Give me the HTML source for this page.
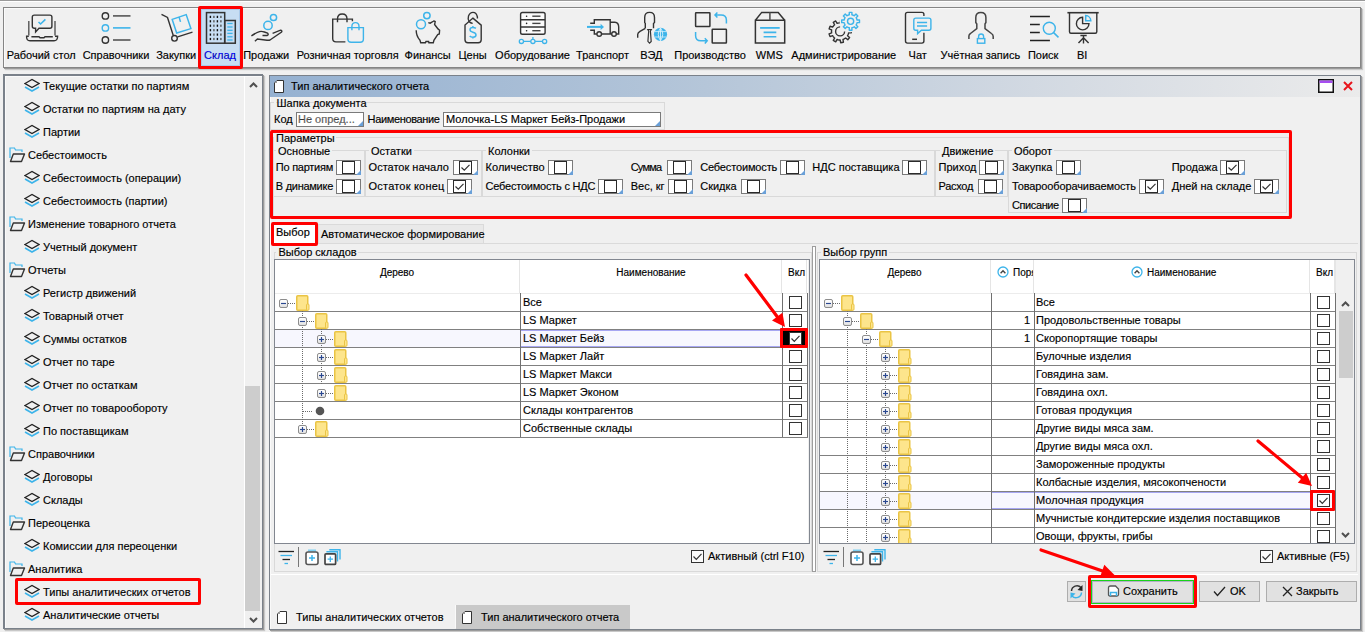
<!DOCTYPE html>
<html><head><meta charset="utf-8">
<style>
*{box-sizing:border-box;margin:0;padding:0}
html,body{width:1365px;height:632px;overflow:hidden;background:#f0f0f0;font-family:"Liberation Sans",sans-serif;font-size:11px;color:#000}
body{position:relative}
.a{position:absolute}
.t{position:absolute;white-space:nowrap;line-height:13px;-webkit-text-stroke:0.15px #000}
.frame{position:absolute;border:1px solid #858585;box-shadow:1px 1px 0 #9a9a9a,2px 2px 1px #c8c8c8, inset 1px 1px 0 #fafafa}
</style></head><body>

<div class="a" style="left:0px;top:0px;width:1365px;height:1px;background:#9a9a9a"></div>
<div class="a" style="left:0px;top:1px;width:1365px;height:1px;background:#fff"></div>
<div class="frame" style="left:3px;top:7px;width:1358px;height:61px"></div>
<div class="a" style="left:201px;top:9px;width:39px;height:57px;background:#c7ddf3;border:1px solid #a9c9ea"></div>
<div class="t" style="left:-58.75px;top:49px;width:200px;text-align:center">Рабочий стол</div>
<div class="t" style="left:16.0px;top:49px;width:200px;text-align:center">Справочники</div>
<div class="t" style="left:76.19999999999999px;top:49px;width:200px;text-align:center">Закупки</div>
<div class="t" style="left:120.0px;top:49px;width:200px;text-align:center;color:#0000ff">Склад</div>
<div class="t" style="left:166.2px;top:49px;width:200px;text-align:center">Продажи</div>
<div class="t" style="left:247.7px;top:49px;width:200px;text-align:center">Розничная торговля</div>
<div class="t" style="left:327.7px;top:49px;width:200px;text-align:center">Финансы</div>
<div class="t" style="left:372.5px;top:49px;width:200px;text-align:center">Цены</div>
<div class="t" style="left:432.5px;top:49px;width:200px;text-align:center">Оборудование</div>
<div class="t" style="left:502.5px;top:49px;width:200px;text-align:center">Транспорт</div>
<div class="t" style="left:551.3px;top:49px;width:200px;text-align:center">ВЭД</div>
<div class="t" style="left:610.1px;top:49px;width:200px;text-align:center">Производство</div>
<div class="t" style="left:669.3px;top:49px;width:200px;text-align:center">WMS</div>
<div class="t" style="left:743.8px;top:49px;width:200px;text-align:center">Администрирование</div>
<div class="t" style="left:817.7px;top:49px;width:200px;text-align:center">Чат</div>
<div class="t" style="left:880.4px;top:49px;width:200px;text-align:center">Учётная запись</div>
<div class="t" style="left:943.2px;top:49px;width:200px;text-align:center">Поиск</div>
<div class="t" style="left:982.0999999999999px;top:49px;width:200px;text-align:center">BI</div>
<svg class="a" style="left:0;top:0" width="1365" height="70" viewBox="0 0 1365 70"><g transform="translate(22,10)"><path d="M6.8 11 V25.6 M33 11 V25.6" fill="none" stroke="#555" stroke-width="1.4" /><path d="M6.8 26.3 H4.6 Q4.3 30.8 8 30.8 H32 Q35.7 30.8 35.6 26.3 H33" fill="none" stroke="#333" stroke-width="1.4" /><path d="M9.4 26.7 H17 L18 27.7 H22 L23 26.7 H30.8" fill="none" stroke="#333" stroke-width="1.4" /><path d="M12.3 5.1 H27.9 Q29.9 5.1 29.9 7.1 V16.2 Q29.9 18.2 27.9 18.2 H17 L13.6 22 V18.2 H12.3 Q10.3 18.2 10.3 16.2 V7.1 Q10.3 5.1 12.3 5.1 Z" fill="none" stroke="#333" stroke-width="1.4" /><path d="M16.5 12 L18.6 14 L23.4 9.4" fill="none" stroke="#3db4ea" stroke-width="1.6" /></g><circle cx="105.4" cy="15.9" r="3.2" fill="none" stroke="#333" stroke-width="1.4"/><path d="M113 15.9 H130.5" fill="none" stroke="#555" stroke-width="1.6" /><circle cx="105.4" cy="27.9" r="3.2" fill="none" stroke="#3db4ea" stroke-width="1.4"/><path d="M113 27.9 H130.5" fill="none" stroke="#3db4ea" stroke-width="1.6" /><circle cx="105.4" cy="40" r="3.2" fill="none" stroke="#333" stroke-width="1.4"/><path d="M113 40 H130.5" fill="none" stroke="#555" stroke-width="1.6" /><g transform="translate(158,8)"><path d="M3.5 6.3 L9.5 9.5 L15.2 27.2" fill="none" stroke="#333" stroke-width="1.4" /><circle cx="16.5" cy="30.3" r="2.8" fill="none" stroke="#333" stroke-width="1.4"/><path d="M19.6 28.8 L34.5 24.2" fill="none" stroke="#333" stroke-width="1.4" /><path d="M14.2 11.4 L28.2 6.6 L32.9 20.6 L18.7 25 Z M21.2 9.5 L22.5 13.9" fill="none" stroke="#3db4ea" stroke-width="1.5" /></g><g transform="translate(200,8)"><rect x="6.5" y="4.6" width="18.2" height="30.6" fill="none" stroke="#333" stroke-width="1.5"/><rect x="24.7" y="12.5" width="10.6" height="22.7" fill="none" stroke="#333" stroke-width="1.5"/><rect x="9.700000000000001" y="7.800000000000001" width="1.4" height="2.2" fill="#111"/><rect x="13.200000000000001" y="7.800000000000001" width="1.4" height="2.2" fill="#555"/><rect x="16.7" y="7.800000000000001" width="1.4" height="2.2" fill="#111"/><rect x="20.2" y="7.800000000000001" width="1.4" height="2.2" fill="#555"/><rect x="9.700000000000001" y="12.200000000000001" width="1.4" height="2.2" fill="#111"/><rect x="13.200000000000001" y="12.200000000000001" width="1.4" height="2.2" fill="#555"/><rect x="16.7" y="12.200000000000001" width="1.4" height="2.2" fill="#111"/><rect x="20.2" y="12.200000000000001" width="1.4" height="2.2" fill="#555"/><rect x="9.700000000000001" y="16.599999999999998" width="1.4" height="2.2" fill="#111"/><rect x="13.200000000000001" y="16.599999999999998" width="1.4" height="2.2" fill="#555"/><rect x="16.7" y="16.599999999999998" width="1.4" height="2.2" fill="#111"/><rect x="20.2" y="16.599999999999998" width="1.4" height="2.2" fill="#555"/><rect x="9.700000000000001" y="21.099999999999998" width="1.4" height="2.2" fill="#111"/><rect x="13.200000000000001" y="21.099999999999998" width="1.4" height="2.2" fill="#555"/><rect x="16.7" y="21.099999999999998" width="1.4" height="2.2" fill="#111"/><rect x="20.2" y="21.099999999999998" width="1.4" height="2.2" fill="#555"/><rect x="9.700000000000001" y="25.5" width="1.4" height="2.2" fill="#111"/><rect x="13.200000000000001" y="25.5" width="1.4" height="2.2" fill="#555"/><rect x="16.7" y="25.5" width="1.4" height="2.2" fill="#111"/><rect x="20.2" y="25.5" width="1.4" height="2.2" fill="#555"/><rect x="9.700000000000001" y="29.9" width="1.4" height="2.2" fill="#111"/><rect x="13.200000000000001" y="29.9" width="1.4" height="2.2" fill="#555"/><rect x="16.7" y="29.9" width="1.4" height="2.2" fill="#111"/><rect x="20.2" y="29.9" width="1.4" height="2.2" fill="#555"/><path d="M27.3 15.5 H32.6" fill="none" stroke="#3db4ea" stroke-width="1.3" /><path d="M27.3 19 H32.6" fill="none" stroke="#3db4ea" stroke-width="1.3" /><path d="M27.3 22.3 H32.6" fill="none" stroke="#3db4ea" stroke-width="1.3" /><path d="M27.3 25.4 H32.6" fill="none" stroke="#3db4ea" stroke-width="1.3" /><path d="M27.3 28.8 H32.6" fill="none" stroke="#3db4ea" stroke-width="1.3" /><path d="M27.3 32 H32.6" fill="none" stroke="#3db4ea" stroke-width="1.3" /></g><g transform="translate(246,8)"><circle cx="27.5" cy="9.5" r="3.1" fill="none" stroke="#3db4ea" stroke-width="1.5"/><circle cx="22" cy="17.4" r="4.2" fill="none" stroke="#3db4ea" stroke-width="1.5"/><path d="M5.4 27.8 Q10 24.8 13.5 23.6 Q15.5 23 18.4 24 L21.5 25 Q23 26.5 21.2 27.5 H16.5" fill="none" stroke="#333" stroke-width="1.4" /><path d="M26.6 25.3 L34.5 22.2 Q36.5 22.5 35.6 24 L24 32 Q23 32.5 21 32.2 L11.4 31 L8.9 33.2" fill="none" stroke="#333" stroke-width="1.4" /></g><g transform="translate(328,8)"><path d="M17.4 33.9 H8 Q4.7 33.9 4.7 30.6 V11.1 H24.4 V13.3" fill="none" stroke="#333" stroke-width="1.4" /><path d="M9.5 14.2 V11 Q9.5 6 14.25 6 Q19 6 19 11 V14.2" fill="none" stroke="#333" stroke-width="1.4" /><path d="M19.9 19.6 H35.4 V31 Q35.4 34.2 32.2 34.2 H23.1 Q19.9 34.2 19.9 31 Z" fill="none" stroke="#3db4ea" stroke-width="1.4" /><path d="M23.9 22.2 V18.5 Q23.9 14.6 27.45 14.6 Q31 14.6 31 18.5 V22.2" fill="none" stroke="#3db4ea" stroke-width="1.4" /></g><g transform="translate(408,8)"><circle cx="18.9" cy="7.6" r="3.2" fill="none" stroke="#3db4ea" stroke-width="1.5"/><circle cx="13" cy="16.3" r="4.5" fill="none" stroke="#3db4ea" stroke-width="1.5"/><path d="M8.2 22.2 Q8.2 28 12 32.3 L12.7 34.8 H17.4 L18 33.5 H20.6 L20.9 34.8 H25.3 L25.9 32.3 L29.7 26.6 L31.3 26 L31.6 22.2 L30 20.9 L26.6 16.5 L27.2 13.6 Q26 12.6 25.3 13.3 L22.2 15.2 L20.3 14.6" fill="none" stroke="#333" stroke-width="1.4" /></g><g transform="translate(453,8)"><path d="M19.9 10.1 L28.2 17.1 V31.8 Q28.2 34.8 25.2 34.8 H15 Q12 34.8 12 31.8 V17.1 Z" fill="none" stroke="#333" stroke-width="1.4" /><path d="M16.3 13.8 Q14.5 10.8 15.5 8 Q17 4.4 20 4.4 Q23.5 4.4 24.4 9 L24.4 10.4" fill="none" stroke="#333" stroke-width="1.4" /><path d="M16.3 13.8 Q17.6 15.4 19.6 15.2" fill="none" stroke="#333" stroke-width="1.4" /><path d="M22.9 20.4 Q21.8 19.4 19.9 19.4 Q17 19.4 17 21.6 Q17 23.6 19.9 24.2 Q23 24.8 23 27 Q23 29.2 19.9 29.2 Q17.8 29.2 16.7 28 M19.9 18 V19.4 M19.9 29.2 V30.6" fill="none" stroke="#3db4ea" stroke-width="1.5" /></g><g transform="translate(512,8)"><rect x="8.6" y="4.5" width="24.5" height="21.8" rx="1.8" fill="#fbfbfb" stroke="#333" stroke-width="1.4"/><path d="M8.6 11.7 H33.1 M8.6 19 H33.1" fill="none" stroke="#333" stroke-width="1.5" /><circle cx="14.6" cy="8.2" r="0.8" fill="#222"/><path d="M20.3 8.2 H28.5" fill="none" stroke="#444" stroke-width="1.4" /><circle cx="14.6" cy="15.4" r="0.8" fill="#222"/><path d="M20.3 15.4 H28.5" fill="none" stroke="#444" stroke-width="1.4" /><circle cx="14.6" cy="22.7" r="0.8" fill="#222"/><path d="M20.3 22.7 H28.5" fill="none" stroke="#444" stroke-width="1.4" /><path d="M20.9 29.1 V31.2 M11.6 33.4 H18.7 M23.1 33.4 H30.4" fill="none" stroke="#3db4ea" stroke-width="1.3" /><circle cx="9.4" cy="33.4" r="2.1" fill="none" stroke="#3db4ea" stroke-width="1.3"/><circle cx="20.9" cy="33.4" r="2.1" fill="none" stroke="#3db4ea" stroke-width="1.3"/><circle cx="32.6" cy="33.4" r="2.1" fill="none" stroke="#3db4ea" stroke-width="1.3"/></g><g transform="translate(582,8)"><path d="M8.2 15.2 H12.3 V11.7 H28.2 V26 M28.2 14.2 H32.9 Q36.7 14.5 36.7 19 V26 H34.3 M29.7 26 H19.5 M14.9 26 H12.3 V22.2 H8.2" fill="none" stroke="#333" stroke-width="1.4" /><circle cx="17.2" cy="26" r="2.3" fill="none" stroke="#333" stroke-width="1.4"/><circle cx="32" cy="26" r="2.3" fill="none" stroke="#333" stroke-width="1.4"/><path d="M5 18.9 H20" fill="none" stroke="#3db4ea" stroke-width="2" /><polygon points="22,18.9 18.6,15.8 18.6,22" fill="#3db4ea"/></g><g transform="translate(632,8)"><path d="M13.3 20.3 V15.5 L12.7 14.5 V9.5 Q12.7 4.4 17.6 4.4 Q22.5 4.4 22.5 9.5 V14.5 L21.5 15.5 V20.3" fill="none" stroke="#333" stroke-width="1.4" /><path d="M13.3 20.3 L8 23.3 Q5.7 24.8 5.7 26.5 V29.7" fill="none" stroke="#333" stroke-width="1.4" /><path d="M15.8 21.5 H19.3 L18.4 23 L19.2 33.4 L17.5 35.1 L15.9 33.4 L16.7 23 Z" fill="none" stroke="#333" stroke-width="1.2" /><circle cx="28.5" cy="26.3" r="6.6" fill="#3db4ea"/><path d="M22.5 23.6 H34.5 M22.5 29 H34.5" fill="none" stroke="#d8f0fb" stroke-width="0.8" /><path d="M28.5 19.9 V32.7 M28.5 19.9 Q24 26.3 28.5 32.7 M28.5 19.9 Q33 26.3 28.5 32.7" fill="none" stroke="#d8f0fb" stroke-width="0.9" /></g><g transform="translate(690,8)"><rect x="5.6" y="4.7" width="14.3" height="13.8" rx="0.5" fill="none" stroke="#333" stroke-width="1.5"/><rect x="22.2" y="21.2" width="14.2" height="13.9" rx="0.5" fill="none" stroke="#333" stroke-width="1.5"/><path d="M36.4 15.5 V12 Q36.4 7 31 7 H25.2 M27.4 4.4 L25 7 L27.4 9.6" fill="none" stroke="#3db4ea" stroke-width="1.5" /><path d="M5.6 24 V27.8 Q5.6 32.8 10.8 32.8 H16.8 M14.8 30.2 L17.2 32.8 L14.8 35.4" fill="none" stroke="#3db4ea" stroke-width="1.5" /></g><g transform="translate(750,8)"><path d="M5.4 12.3 H34.7 V35.1 H5.4 Z M5.4 12.3 L11.7 4.4 H28.2 L34.7 12.3" fill="none" stroke="#333" stroke-width="1.5" /><path d="M19.9 4.4 V12.3" fill="none" stroke="#555" stroke-width="1.6" /><path d="M10.1 19.9 H29.7" fill="none" stroke="#3db4ea" stroke-width="1.8" /><path d="M13.6 24.4 H26.3 M13.6 28.8 H26.3" fill="none" stroke="#3db4ea" stroke-width="1.6" /></g><g transform="translate(824,8)"><path d="M32.91 11.36 L33.07 12.01 L35.50 11.96 L35.50 14.64 L33.07 14.59 L32.91 15.24 L32.43 16.39 L32.09 16.97 L33.84 18.65 L31.95 20.54 L30.27 18.79 L29.69 19.13 L28.54 19.61 L27.89 19.77 L27.94 22.20 L25.26 22.20 L25.31 19.77 L24.66 19.61 L23.51 19.13 L22.93 18.79 L21.25 20.54 L19.36 18.65 L21.11 16.97 L20.77 16.39 L20.29 15.24 L20.13 14.59 L17.70 14.64 L17.70 11.96 L20.13 12.01 L20.29 11.36 L20.77 10.21 L21.11 9.63 L19.36 7.95 L21.25 6.06 L22.93 7.81 L23.51 7.47 L24.66 6.99 L25.31 6.83 L25.26 4.40 L27.94 4.40 L27.89 6.83 L28.54 6.99 L29.69 7.47 L30.27 7.81 L31.95 6.06 L33.84 7.95 L32.09 9.63 L32.43 10.21 Z" fill="none" stroke="#3db4ea" stroke-width="1.4" stroke-linejoin="round"/><circle cx="26.6" cy="13.3" r="3.1" fill="none" stroke="#3db4ea" stroke-width="1.4"/><clipPath id="gc"><path d="M0 0 H40 V40 H0 Z M26.6 13.3 m-11 0 a11 11 0 1 0 22 0 a11 11 0 1 0 -22 0 Z" clip-rule="evenodd"/></clipPath><g clip-path="url(#gc)"><path d="M24.40 21.15 L24.58 21.97 L27.31 21.98 L27.31 24.82 L24.58 24.83 L24.40 25.65 L23.91 27.01 L23.52 27.75 L25.60 29.52 L23.78 31.69 L21.67 29.95 L21.01 30.46 L19.76 31.18 L18.98 31.50 L19.44 34.19 L16.65 34.69 L16.16 32.00 L15.32 31.96 L13.90 31.71 L13.10 31.46 L11.72 33.82 L9.27 32.40 L10.62 30.03 L10.00 29.46 L9.07 28.36 L8.62 27.65 L6.05 28.57 L5.08 25.90 L7.64 24.95 L7.53 24.12 L7.53 22.68 L7.64 21.85 L5.08 20.90 L6.05 18.23 L8.62 19.15 L9.07 18.44 L10.00 17.34 L10.62 16.77 L9.27 14.40 L11.72 12.98 L13.10 15.34 L13.90 15.09 L15.32 14.84 L16.16 14.80 L16.65 12.11 L19.44 12.61 L18.98 15.30 L19.76 15.62 L21.01 16.34 L21.67 16.85 L23.78 15.11 L25.60 17.28 L23.52 19.05 L23.91 19.79 Z" fill="none" stroke="#333" stroke-width="1.4" stroke-linejoin="round"/></g><path d="M16.1 18.9 A4.5 4.5 0 1 0 20.6 23.4" fill="none" stroke="#333" stroke-width="1.4" /></g><g transform="translate(898,8)"><path d="M25.9 7.9 V6.4 Q25.9 4.4 23.9 4.4 H9.5 Q7.5 4.4 7.5 6.4 V33.1 Q7.5 35.1 9.5 35.1 H23.9 Q25.9 35.1 25.9 33.1 V24.7" fill="none" stroke="#333" stroke-width="1.4" /><path d="M14.2 31.3 H19" fill="none" stroke="#333" stroke-width="1.5" /><path d="M17.8 10.1 H30.9 Q32.9 10.1 32.9 12.1 V20.2 Q32.9 22.2 30.9 22.2 H23.4 L19.6 25.6 V22.2 H17.8 Q15.8 22.2 15.8 20.2 V12.1 Q15.8 10.1 17.8 10.1 Z" fill="none" stroke="#3db4ea" stroke-width="1.4" /><path d="M19 14.6 H29.1 M19 18 H29.1" fill="none" stroke="#3db4ea" stroke-width="1.5" /></g><g transform="translate(960,8)"><path d="M8.9 31 V28 Q8.9 26.5 10.5 25.5 L16.8 20.6 V16 L15.8 14.5 V9.5 Q15.8 4.4 20.85 4.4 Q25.9 4.4 25.9 9.5 V14.5 L25 16 V20.6 L31.4 25.5 Q33.2 26.7 33.2 28.4 V31" fill="none" stroke="#444" stroke-width="1.5" /><rect x="17.4" y="30.6" width="7.4" height="4.6" fill="none" stroke="#3db4ea" stroke-width="1.4"/><path d="M18.6 30.6 V28.5 Q18.6 26 21.1 26 Q23.6 26 23.6 28.5 V30.6" fill="none" stroke="#3db4ea" stroke-width="1.4" /></g><g transform="translate(1024,8)"><path d="M6 8.4 H25.9 M6 16.5 H15.8 M6 24.4 H15.8 M6 32.5 H25.9" fill="none" stroke="#222" stroke-width="1.5" /><circle cx="25.3" cy="20.3" r="6" fill="none" stroke="#3db4ea" stroke-width="1.4"/><path d="M29.6 24.6 L34.5 29.4" fill="none" stroke="#3db4ea" stroke-width="1.5" /></g><g transform="translate(1062,8)"><path d="M5.4 4.7 H36.7" fill="none" stroke="#333" stroke-width="1.6" /><path d="M7.5 4.7 V23.8 Q7.5 25.3 9 25.3 H33.3 Q34.8 25.3 34.8 23.8 V4.7" fill="none" stroke="#333" stroke-width="1.4" /><path d="M18.4 27.5 H24.7 M21.5 27.5 V35.4 M21.5 29.7 L16.5 35.1 M21.5 29.7 L26.6 35.1" fill="none" stroke="#333" stroke-width="1.4" /><path d="M20.6 9.3 A6.3 6.3 0 1 0 27 15.6 H20.6 Z" fill="none" stroke="#333" stroke-width="1.4" /><path d="M23.7 7.6 A5.4 5.4 0 0 1 28.8 12.8 H23.7 Z" fill="none" stroke="#3db4ea" stroke-width="1.5" /></g></svg>
<div class="a" style="left:198px;top:6px;width:45px;height:63px;border:3px solid #ff0000;border-radius:2px"></div>
<div class="frame" style="left:3px;top:74px;width:260px;height:555px;border-width:2px 1px 1px 2px;border-color:#7a818a"></div>
<div class="a" style="left:244px;top:76px;width:1px;height:552px;background:#fff"></div>
<div class="a" style="left:245px;top:386px;width:15px;height:225px;background:#cdcdcd"></div>
<svg class="a" style="left:248.5px;top:81px;" width="9" height="7" viewBox="0 0 9 7"><path d="M1 6 L4.5 2.5 L8 6" fill="none" stroke="#505050" stroke-width="2"/></svg>
<svg class="a" style="left:248.5px;top:617px;" width="9" height="7" viewBox="0 0 9 7"><path d="M1 1 L4.5 4.5 L8 1" fill="none" stroke="#505050" stroke-width="2"/></svg>
<svg class="a" style="left:24px;top:78px;" width="16" height="15" viewBox="0 0 16 15"><path d="M1 5.5 L8 1.5 L15 5.5 L8 9.5 Z" fill="none" stroke="#222" stroke-width="1.3" stroke-linejoin="miter"/><path d="M1 9 L8 13 L15 9" fill="none" stroke="#3db4ea" stroke-width="1.6"/></svg>
<div class="t" style="left:43px;top:80px">Текущие остатки по партиям</div>
<svg class="a" style="left:24px;top:101px;" width="16" height="15" viewBox="0 0 16 15"><path d="M1 5.5 L8 1.5 L15 5.5 L8 9.5 Z" fill="none" stroke="#222" stroke-width="1.3" stroke-linejoin="miter"/><path d="M1 9 L8 13 L15 9" fill="none" stroke="#3db4ea" stroke-width="1.6"/></svg>
<div class="t" style="left:43px;top:103px">Остатки по партиям на дату</div>
<svg class="a" style="left:24px;top:124px;" width="16" height="15" viewBox="0 0 16 15"><path d="M1 5.5 L8 1.5 L15 5.5 L8 9.5 Z" fill="none" stroke="#222" stroke-width="1.3" stroke-linejoin="miter"/><path d="M1 9 L8 13 L15 9" fill="none" stroke="#3db4ea" stroke-width="1.6"/></svg>
<div class="t" style="left:43px;top:126px">Партии</div>
<svg class="a" style="left:9px;top:147px;" width="17" height="16" viewBox="0 0 17 16"><path d="M1 11 V1 H5.5 L6.5 3 H13 V5" fill="none" stroke="#3db4ea" stroke-width="1.2"/><path d="M4.3 7 H15.5 L12.5 14.5 H1.5 Z" fill="none" stroke="#333" stroke-width="1.4" stroke-linejoin="round"/></svg>
<div class="t" style="left:28px;top:149px">Себестоимость</div>
<svg class="a" style="left:24px;top:170px;" width="16" height="15" viewBox="0 0 16 15"><path d="M1 5.5 L8 1.5 L15 5.5 L8 9.5 Z" fill="none" stroke="#222" stroke-width="1.3" stroke-linejoin="miter"/><path d="M1 9 L8 13 L15 9" fill="none" stroke="#3db4ea" stroke-width="1.6"/></svg>
<div class="t" style="left:43px;top:172px">Себестоимость (операции)</div>
<svg class="a" style="left:24px;top:193px;" width="16" height="15" viewBox="0 0 16 15"><path d="M1 5.5 L8 1.5 L15 5.5 L8 9.5 Z" fill="none" stroke="#222" stroke-width="1.3" stroke-linejoin="miter"/><path d="M1 9 L8 13 L15 9" fill="none" stroke="#3db4ea" stroke-width="1.6"/></svg>
<div class="t" style="left:43px;top:195px">Себестоимость (партии)</div>
<svg class="a" style="left:9px;top:216px;" width="17" height="16" viewBox="0 0 17 16"><path d="M1 11 V1 H5.5 L6.5 3 H13 V5" fill="none" stroke="#3db4ea" stroke-width="1.2"/><path d="M4.3 7 H15.5 L12.5 14.5 H1.5 Z" fill="none" stroke="#333" stroke-width="1.4" stroke-linejoin="round"/></svg>
<div class="t" style="left:28px;top:218px">Изменение товарного отчета</div>
<svg class="a" style="left:24px;top:239px;" width="16" height="15" viewBox="0 0 16 15"><path d="M1 5.5 L8 1.5 L15 5.5 L8 9.5 Z" fill="none" stroke="#222" stroke-width="1.3" stroke-linejoin="miter"/><path d="M1 9 L8 13 L15 9" fill="none" stroke="#3db4ea" stroke-width="1.6"/></svg>
<div class="t" style="left:43px;top:241px">Учетный документ</div>
<svg class="a" style="left:9px;top:262px;" width="17" height="16" viewBox="0 0 17 16"><path d="M1 11 V1 H5.5 L6.5 3 H13 V5" fill="none" stroke="#3db4ea" stroke-width="1.2"/><path d="M4.3 7 H15.5 L12.5 14.5 H1.5 Z" fill="none" stroke="#333" stroke-width="1.4" stroke-linejoin="round"/></svg>
<div class="t" style="left:28px;top:264px">Отчеты</div>
<svg class="a" style="left:24px;top:285px;" width="16" height="15" viewBox="0 0 16 15"><path d="M1 5.5 L8 1.5 L15 5.5 L8 9.5 Z" fill="none" stroke="#222" stroke-width="1.3" stroke-linejoin="miter"/><path d="M1 9 L8 13 L15 9" fill="none" stroke="#3db4ea" stroke-width="1.6"/></svg>
<div class="t" style="left:43px;top:287px">Регистр движений</div>
<svg class="a" style="left:24px;top:308px;" width="16" height="15" viewBox="0 0 16 15"><path d="M1 5.5 L8 1.5 L15 5.5 L8 9.5 Z" fill="none" stroke="#222" stroke-width="1.3" stroke-linejoin="miter"/><path d="M1 9 L8 13 L15 9" fill="none" stroke="#3db4ea" stroke-width="1.6"/></svg>
<div class="t" style="left:43px;top:310px">Товарный отчет</div>
<svg class="a" style="left:24px;top:331px;" width="16" height="15" viewBox="0 0 16 15"><path d="M1 5.5 L8 1.5 L15 5.5 L8 9.5 Z" fill="none" stroke="#222" stroke-width="1.3" stroke-linejoin="miter"/><path d="M1 9 L8 13 L15 9" fill="none" stroke="#3db4ea" stroke-width="1.6"/></svg>
<div class="t" style="left:43px;top:333px">Суммы остатков</div>
<svg class="a" style="left:24px;top:354px;" width="16" height="15" viewBox="0 0 16 15"><path d="M1 5.5 L8 1.5 L15 5.5 L8 9.5 Z" fill="none" stroke="#222" stroke-width="1.3" stroke-linejoin="miter"/><path d="M1 9 L8 13 L15 9" fill="none" stroke="#3db4ea" stroke-width="1.6"/></svg>
<div class="t" style="left:43px;top:356px">Отчет по таре</div>
<svg class="a" style="left:24px;top:377px;" width="16" height="15" viewBox="0 0 16 15"><path d="M1 5.5 L8 1.5 L15 5.5 L8 9.5 Z" fill="none" stroke="#222" stroke-width="1.3" stroke-linejoin="miter"/><path d="M1 9 L8 13 L15 9" fill="none" stroke="#3db4ea" stroke-width="1.6"/></svg>
<div class="t" style="left:43px;top:379px">Отчет по остаткам</div>
<svg class="a" style="left:24px;top:400px;" width="16" height="15" viewBox="0 0 16 15"><path d="M1 5.5 L8 1.5 L15 5.5 L8 9.5 Z" fill="none" stroke="#222" stroke-width="1.3" stroke-linejoin="miter"/><path d="M1 9 L8 13 L15 9" fill="none" stroke="#3db4ea" stroke-width="1.6"/></svg>
<div class="t" style="left:43px;top:402px">Отчет по товарообороту</div>
<svg class="a" style="left:24px;top:423px;" width="16" height="15" viewBox="0 0 16 15"><path d="M1 5.5 L8 1.5 L15 5.5 L8 9.5 Z" fill="none" stroke="#222" stroke-width="1.3" stroke-linejoin="miter"/><path d="M1 9 L8 13 L15 9" fill="none" stroke="#3db4ea" stroke-width="1.6"/></svg>
<div class="t" style="left:43px;top:425px">По поставщикам</div>
<svg class="a" style="left:9px;top:446px;" width="17" height="16" viewBox="0 0 17 16"><path d="M1 11 V1 H5.5 L6.5 3 H13 V5" fill="none" stroke="#3db4ea" stroke-width="1.2"/><path d="M4.3 7 H15.5 L12.5 14.5 H1.5 Z" fill="none" stroke="#333" stroke-width="1.4" stroke-linejoin="round"/></svg>
<div class="t" style="left:28px;top:448px">Справочники</div>
<svg class="a" style="left:24px;top:469px;" width="16" height="15" viewBox="0 0 16 15"><path d="M1 5.5 L8 1.5 L15 5.5 L8 9.5 Z" fill="none" stroke="#222" stroke-width="1.3" stroke-linejoin="miter"/><path d="M1 9 L8 13 L15 9" fill="none" stroke="#3db4ea" stroke-width="1.6"/></svg>
<div class="t" style="left:43px;top:471px">Договоры</div>
<svg class="a" style="left:24px;top:492px;" width="16" height="15" viewBox="0 0 16 15"><path d="M1 5.5 L8 1.5 L15 5.5 L8 9.5 Z" fill="none" stroke="#222" stroke-width="1.3" stroke-linejoin="miter"/><path d="M1 9 L8 13 L15 9" fill="none" stroke="#3db4ea" stroke-width="1.6"/></svg>
<div class="t" style="left:43px;top:494px">Склады</div>
<svg class="a" style="left:9px;top:515px;" width="17" height="16" viewBox="0 0 17 16"><path d="M1 11 V1 H5.5 L6.5 3 H13 V5" fill="none" stroke="#3db4ea" stroke-width="1.2"/><path d="M4.3 7 H15.5 L12.5 14.5 H1.5 Z" fill="none" stroke="#333" stroke-width="1.4" stroke-linejoin="round"/></svg>
<div class="t" style="left:28px;top:517px">Переоценка</div>
<svg class="a" style="left:24px;top:538px;" width="16" height="15" viewBox="0 0 16 15"><path d="M1 5.5 L8 1.5 L15 5.5 L8 9.5 Z" fill="none" stroke="#222" stroke-width="1.3" stroke-linejoin="miter"/><path d="M1 9 L8 13 L15 9" fill="none" stroke="#3db4ea" stroke-width="1.6"/></svg>
<div class="t" style="left:43px;top:540px">Комиссии для переоценки</div>
<svg class="a" style="left:9px;top:561px;" width="17" height="16" viewBox="0 0 17 16"><path d="M1 11 V1 H5.5 L6.5 3 H13 V5" fill="none" stroke="#3db4ea" stroke-width="1.2"/><path d="M4.3 7 H15.5 L12.5 14.5 H1.5 Z" fill="none" stroke="#333" stroke-width="1.4" stroke-linejoin="round"/></svg>
<div class="t" style="left:28px;top:563px">Аналитика</div>
<svg class="a" style="left:24px;top:584px;" width="16" height="15" viewBox="0 0 16 15"><path d="M1 5.5 L8 1.5 L15 5.5 L8 9.5 Z" fill="none" stroke="#222" stroke-width="1.3" stroke-linejoin="miter"/><path d="M1 9 L8 13 L15 9" fill="none" stroke="#3db4ea" stroke-width="1.6"/></svg>
<div class="t" style="left:43px;top:586px">Типы аналитических отчетов</div>
<svg class="a" style="left:24px;top:607px;" width="16" height="15" viewBox="0 0 16 15"><path d="M1 5.5 L8 1.5 L15 5.5 L8 9.5 Z" fill="none" stroke="#222" stroke-width="1.3" stroke-linejoin="miter"/><path d="M1 9 L8 13 L15 9" fill="none" stroke="#3db4ea" stroke-width="1.6"/></svg>
<div class="t" style="left:43px;top:609px">Аналитические отчеты</div>
<div class="a" style="left:15px;top:578px;width:186px;height:27px;border:3px solid #ff0000;border-radius:2px"></div>
<div class="frame" style="left:269px;top:75px;width:1092px;height:555px;border-color:#7a818a"></div>
<div class="a" style="left:270px;top:76px;width:1090px;height:21px;background:linear-gradient(90deg,#95b1d1 0%,#b5c6d9 40%,#d2d9e2 70%,#ebebeb 100%)"></div>
<svg class="a" style="left:274px;top:80px;" width="11" height="14" viewBox="0 0 11 14"><path d="M3 0.5 H9.5 V12.5 H0.5 V3 Z" fill="#fff" stroke="#333" stroke-width="1"/><path d="M0.5 3 L3 0.5 V3 Z" fill="#999"/></svg>
<div class="t" style="left:291px;top:80px">Тип аналитического отчета</div>
<svg class="a" style="left:1318px;top:79px;" width="16" height="14" viewBox="0 0 16 14"><rect x="0.75" y="0.75" width="14.5" height="12.5" fill="#fff" stroke="#111" stroke-width="1.5"/><rect x="1.5" y="1.5" width="13" height="2.5" fill="#a64df0"/></svg>
<svg class="a" style="left:1343px;top:81px;" width="10" height="10" viewBox="0 0 10 10"><path d="M1 1 L9 9 M9 1 L1 9" stroke="#e8141b" stroke-width="2"/></svg>
<div class="a" style="left:270px;top:102px;width:395px;height:28px;border:1px solid #d9d9d9"></div>
<div class="t" style="left:276.5px;top:97px">Шапка документа</div>
<div class="a" style="left:274px;top:102px;width:2px;height:1px;background:#f0f0f0"></div>
<div class="t" style="left:274px;top:113px">Код</div>
<div class="a" style="left:296px;top:112px;width:68px;height:15px;background:#fff;border:1px solid #7a7a7a"></div><svg class="a" style="left:358px;top:121px;" width="5" height="5" viewBox="0 0 5 5"><path d="M5 0 V5 H0 Z" fill="#6aa0d8"/></svg>
<div class="t" style="left:298px;top:113px;color:#6d6d6d">Не опред...</div>
<div class="t" style="left:367.6px;top:113px;letter-spacing:-0.36px">Наименование</div>
<div class="a" style="left:443px;top:112px;width:218px;height:15px;background:#fff;border:1px solid #7a7a7a"></div><svg class="a" style="left:655px;top:121px;" width="5" height="5" viewBox="0 0 5 5"><path d="M5 0 V5 H0 Z" fill="#6aa0d8"/></svg>
<div class="t" style="left:446px;top:113px">Молочка-LS Маркет Бейз-Продажи</div>
<div class="a" style="left:273px;top:137px;width:1016px;height:80px;border:1px solid #d9d9d9"></div>
<div class="a" style="left:273px;top:150px;width:92px;height:47px;border:1px solid #d9d9d9"></div>
<div class="a" style="left:365px;top:150px;width:117px;height:47px;border:1px solid #d9d9d9"></div>
<div class="a" style="left:482px;top:150px;width:453px;height:47px;border:1px solid #d9d9d9"></div>
<div class="a" style="left:935px;top:150px;width:73px;height:47px;border:1px solid #d9d9d9"></div>
<div class="a" style="left:1008px;top:150px;width:279px;height:63px;border:1px solid #d9d9d9"></div>
<div class="a" style="left:274px;top:135px;width:62px;height:8px;background:#f0f0f0"></div>
<div class="t" style="left:276px;top:132px">Параметры</div>
<div class="a" style="left:276px;top:148px;width:56px;height:8px;background:#f0f0f0"></div>
<div class="t" style="left:278px;top:145px">Основные</div>
<div class="a" style="left:369px;top:148px;width:45px;height:8px;background:#f0f0f0"></div>
<div class="t" style="left:371px;top:145px">Остатки</div>
<div class="a" style="left:486px;top:148px;width:46px;height:8px;background:#f0f0f0"></div>
<div class="t" style="left:488px;top:145px">Колонки</div>
<div class="a" style="left:940px;top:148px;width:55px;height:8px;background:#f0f0f0"></div>
<div class="t" style="left:942px;top:145px">Движение</div>
<div class="a" style="left:1012px;top:148px;width:42px;height:8px;background:#f0f0f0"></div>
<div class="t" style="left:1014px;top:145px">Оборот</div>
<div class="t" style="left:275.8px;top:161px;letter-spacing:-0.25px">По партиям</div>
<div class="a" style="left:336px;top:160px;width:25px;height:15px;background:#fff;border:1px solid #7a7a7a"></div><div class="a" style="left:342px;top:161px;width:13px;height:13px;border:1px solid #2a2a2a;background:#fff"></div><svg class="a" style="left:356px;top:170px;" width="5" height="5" viewBox="0 0 5 5"><path d="M5 0 V5 H0 Z" fill="#6aa0d8"/></svg>
<div class="t" style="left:275.8px;top:180px;letter-spacing:-0.27px">В динамике</div>
<div class="a" style="left:336px;top:179px;width:25px;height:15px;background:#fff;border:1px solid #7a7a7a"></div><div class="a" style="left:342px;top:180px;width:13px;height:13px;border:1px solid #2a2a2a;background:#fff"></div><svg class="a" style="left:356px;top:189px;" width="5" height="5" viewBox="0 0 5 5"><path d="M5 0 V5 H0 Z" fill="#6aa0d8"/></svg>
<div class="t" style="left:368.6px;top:161px">Остаток начало</div>
<div class="a" style="left:453px;top:160px;width:25px;height:15px;background:#fff;border:1px solid #7a7a7a"></div><div class="a" style="left:459px;top:161px;width:13px;height:13px;border:1px solid #2a2a2a;background:#fff"></div><svg class="a" style="left:473px;top:170px;" width="5" height="5" viewBox="0 0 5 5"><path d="M5 0 V5 H0 Z" fill="#6aa0d8"/></svg><svg class="a" style="left:459px;top:161px;" width="13" height="13" viewBox="0 0 13 13"><path d="M2.5 6.5 L5.3 9.2 L10.5 3.8" fill="none" stroke="#333" stroke-width="1.2"/></svg>
<div class="t" style="left:368.6px;top:180px;letter-spacing:0.2px">Остаток конец</div>
<div class="a" style="left:447px;top:179px;width:25px;height:15px;background:#fff;border:1px solid #7a7a7a"></div><div class="a" style="left:453px;top:180px;width:13px;height:13px;border:1px solid #2a2a2a;background:#fff"></div><svg class="a" style="left:467px;top:189px;" width="5" height="5" viewBox="0 0 5 5"><path d="M5 0 V5 H0 Z" fill="#6aa0d8"/></svg><svg class="a" style="left:453px;top:180px;" width="13" height="13" viewBox="0 0 13 13"><path d="M2.5 6.5 L5.3 9.2 L10.5 3.8" fill="none" stroke="#333" stroke-width="1.2"/></svg>
<div class="t" style="left:485.6px;top:161px">Количество</div>
<div class="a" style="left:548px;top:160px;width:25px;height:15px;background:#fff;border:1px solid #7a7a7a"></div><div class="a" style="left:554px;top:161px;width:13px;height:13px;border:1px solid #2a2a2a;background:#fff"></div><svg class="a" style="left:568px;top:170px;" width="5" height="5" viewBox="0 0 5 5"><path d="M5 0 V5 H0 Z" fill="#6aa0d8"/></svg>
<div class="t" style="left:485.6px;top:180px;letter-spacing:-0.22px">Себестоимость с НДС</div>
<div class="a" style="left:598px;top:179px;width:25px;height:15px;background:#fff;border:1px solid #7a7a7a"></div><div class="a" style="left:604px;top:180px;width:13px;height:13px;border:1px solid #2a2a2a;background:#fff"></div><svg class="a" style="left:618px;top:189px;" width="5" height="5" viewBox="0 0 5 5"><path d="M5 0 V5 H0 Z" fill="#6aa0d8"/></svg>
<div class="t" style="left:630.7px;top:161px;letter-spacing:-0.8px">Сумма</div>
<div class="a" style="left:667px;top:160px;width:25px;height:15px;background:#fff;border:1px solid #7a7a7a"></div><div class="a" style="left:673px;top:161px;width:13px;height:13px;border:1px solid #2a2a2a;background:#fff"></div><svg class="a" style="left:687px;top:170px;" width="5" height="5" viewBox="0 0 5 5"><path d="M5 0 V5 H0 Z" fill="#6aa0d8"/></svg>
<div class="t" style="left:630.7px;top:180px">Вес, кг</div>
<div class="a" style="left:668px;top:179px;width:25px;height:15px;background:#fff;border:1px solid #7a7a7a"></div><div class="a" style="left:674px;top:180px;width:13px;height:13px;border:1px solid #2a2a2a;background:#fff"></div><svg class="a" style="left:688px;top:189px;" width="5" height="5" viewBox="0 0 5 5"><path d="M5 0 V5 H0 Z" fill="#6aa0d8"/></svg>
<div class="t" style="left:700.2px;top:161px;letter-spacing:-0.15px">Себестоимость</div>
<div class="a" style="left:780px;top:160px;width:25px;height:15px;background:#fff;border:1px solid #7a7a7a"></div><div class="a" style="left:786px;top:161px;width:13px;height:13px;border:1px solid #2a2a2a;background:#fff"></div><svg class="a" style="left:800px;top:170px;" width="5" height="5" viewBox="0 0 5 5"><path d="M5 0 V5 H0 Z" fill="#6aa0d8"/></svg>
<div class="t" style="left:700.2px;top:180px">Скидка</div>
<div class="a" style="left:741px;top:179px;width:25px;height:15px;background:#fff;border:1px solid #7a7a7a"></div><div class="a" style="left:747px;top:180px;width:13px;height:13px;border:1px solid #2a2a2a;background:#fff"></div><svg class="a" style="left:761px;top:189px;" width="5" height="5" viewBox="0 0 5 5"><path d="M5 0 V5 H0 Z" fill="#6aa0d8"/></svg>
<div class="t" style="left:812.3px;top:161px">НДС поставщика</div>
<div class="a" style="left:902px;top:160px;width:25px;height:15px;background:#fff;border:1px solid #7a7a7a"></div><div class="a" style="left:908px;top:161px;width:13px;height:13px;border:1px solid #2a2a2a;background:#fff"></div><svg class="a" style="left:922px;top:170px;" width="5" height="5" viewBox="0 0 5 5"><path d="M5 0 V5 H0 Z" fill="#6aa0d8"/></svg>
<div class="t" style="left:938.6px;top:161px">Приход</div>
<div class="a" style="left:979px;top:160px;width:25px;height:15px;background:#fff;border:1px solid #7a7a7a"></div><div class="a" style="left:985px;top:161px;width:13px;height:13px;border:1px solid #2a2a2a;background:#fff"></div><svg class="a" style="left:999px;top:170px;" width="5" height="5" viewBox="0 0 5 5"><path d="M5 0 V5 H0 Z" fill="#6aa0d8"/></svg>
<div class="t" style="left:938.6px;top:180px;letter-spacing:-0.3px">Расход</div>
<div class="a" style="left:978px;top:179px;width:25px;height:15px;background:#fff;border:1px solid #7a7a7a"></div><div class="a" style="left:984px;top:180px;width:13px;height:13px;border:1px solid #2a2a2a;background:#fff"></div><svg class="a" style="left:998px;top:189px;" width="5" height="5" viewBox="0 0 5 5"><path d="M5 0 V5 H0 Z" fill="#6aa0d8"/></svg>
<div class="t" style="left:1012px;top:161px">Закупка</div>
<div class="a" style="left:1056px;top:160px;width:25px;height:15px;background:#fff;border:1px solid #7a7a7a"></div><div class="a" style="left:1062px;top:161px;width:13px;height:13px;border:1px solid #2a2a2a;background:#fff"></div><svg class="a" style="left:1076px;top:170px;" width="5" height="5" viewBox="0 0 5 5"><path d="M5 0 V5 H0 Z" fill="#6aa0d8"/></svg>
<div class="t" style="left:1012px;top:180px;letter-spacing:-0.12px">Товарооборачиваемость</div>
<div class="a" style="left:1139px;top:179px;width:25px;height:15px;background:#fff;border:1px solid #7a7a7a"></div><div class="a" style="left:1145px;top:180px;width:13px;height:13px;border:1px solid #2a2a2a;background:#fff"></div><svg class="a" style="left:1159px;top:189px;" width="5" height="5" viewBox="0 0 5 5"><path d="M5 0 V5 H0 Z" fill="#6aa0d8"/></svg><svg class="a" style="left:1145px;top:180px;" width="13" height="13" viewBox="0 0 13 13"><path d="M2.5 6.5 L5.3 9.2 L10.5 3.8" fill="none" stroke="#333" stroke-width="1.2"/></svg>
<div class="t" style="left:1012px;top:199px;letter-spacing:-0.4px">Списание</div>
<div class="a" style="left:1062px;top:198px;width:25px;height:15px;background:#fff;border:1px solid #7a7a7a"></div><div class="a" style="left:1068px;top:199px;width:13px;height:13px;border:1px solid #2a2a2a;background:#fff"></div><svg class="a" style="left:1082px;top:208px;" width="5" height="5" viewBox="0 0 5 5"><path d="M5 0 V5 H0 Z" fill="#6aa0d8"/></svg>
<div class="t" style="left:1171.7px;top:161px">Продажа</div>
<div class="a" style="left:1220px;top:160px;width:25px;height:15px;background:#fff;border:1px solid #7a7a7a"></div><div class="a" style="left:1226px;top:161px;width:13px;height:13px;border:1px solid #2a2a2a;background:#fff"></div><svg class="a" style="left:1240px;top:170px;" width="5" height="5" viewBox="0 0 5 5"><path d="M5 0 V5 H0 Z" fill="#6aa0d8"/></svg><svg class="a" style="left:1226px;top:161px;" width="13" height="13" viewBox="0 0 13 13"><path d="M2.5 6.5 L5.3 9.2 L10.5 3.8" fill="none" stroke="#333" stroke-width="1.2"/></svg>
<div class="t" style="left:1171.7px;top:180px">Дней на складе</div>
<div class="a" style="left:1254px;top:179px;width:25px;height:15px;background:#fff;border:1px solid #7a7a7a"></div><div class="a" style="left:1260px;top:180px;width:13px;height:13px;border:1px solid #2a2a2a;background:#fff"></div><svg class="a" style="left:1274px;top:189px;" width="5" height="5" viewBox="0 0 5 5"><path d="M5 0 V5 H0 Z" fill="#6aa0d8"/></svg><svg class="a" style="left:1260px;top:180px;" width="13" height="13" viewBox="0 0 13 13"><path d="M2.5 6.5 L5.3 9.2 L10.5 3.8" fill="none" stroke="#333" stroke-width="1.2"/></svg>
<div class="a" style="left:270px;top:130px;width:1022px;height:89px;border:3px solid #ff0000;border-radius:2px"></div>
<div class="a" style="left:318px;top:224px;width:166px;height:19px;background:#e9e9e9;border:1px solid #dadada;border-bottom:none"></div>
<div class="t" style="left:321px;top:228px">Автоматическое формирование</div>
<div class="a" style="left:271px;top:243px;width:1087px;height:1px;background:#dadada"></div>
<div class="a" style="left:271px;top:222px;width:47px;height:24px;background:#fff;border:3px solid #ff0000;border-radius:2px"></div>
<div class="t" style="left:276px;top:226px">Выбор</div>
<svg width="0" height="0" style="position:absolute"><defs><linearGradient id="eg" x1="0" y1="0" x2="0" y2="1"><stop offset="0" stop-color="#fff"/><stop offset="0.5" stop-color="#f4f4f4"/><stop offset="1" stop-color="#dcdcdc"/></linearGradient></defs></svg><div class="a" style="left:274px;top:252px;width:538px;height:320px;border:1px solid #d9d9d9"></div><div class="a" style="left:276px;top:250px;width:82px;height:5px;background:#f0f0f0"></div><div class="t" style="left:278.5px;top:246px">Выбор складов</div><div class="a" style="left:817px;top:252px;width:540px;height:320px;border:1px solid #d9d9d9"></div><div class="a" style="left:821px;top:250px;width:68px;height:5px;background:#f0f0f0"></div><div class="t" style="left:823px;top:246px">Выбор групп</div><div class="a" style="left:812px;top:246px;width:4px;height:326px;border:1px solid #9d9d9d;background:#fff"></div><div class="a" style="left:274px;top:259px;width:536px;height:285px;background:#fff;border:1px solid #828790"></div><div class="a" style="left:0;top:0;width:1365px;height:632px;clip-path:inset(260px 556px 89px 275px)"><div class="a" style="left:519px;top:260px;width:1px;height:33px;background:#e5e5e5"></div><div class="a" style="left:781px;top:260px;width:1px;height:33px;background:#e5e5e5"></div><div class="a" style="left:806px;top:260px;width:1px;height:33px;background:#e5e5e5"></div><div class="a" style="left:275px;top:293px;width:534px;height:1px;background:#ececec"></div><div class="t" style="left:274px;top:266px;width:246px;text-align:center;font-size:10px">Дерево</div><div class="t" style="left:520px;top:266px;width:262px;text-align:center;font-size:10px">Наименование</div><div class="t" style="left:788px;top:266px;width:18px;overflow:hidden;font-size:10px">Вкл</div><div class="a" style="left:275px;top:330px;width:532px;height:17px;background:#f7f7fe"></div><div class="a" style="left:521px;top:330px;width:261px;height:1px;background:#a6a6f2"></div><div class="a" style="left:521px;top:346px;width:261px;height:1px;background:#a6a6f2"></div><div class="a" style="left:275px;top:311px;width:533px;height:1px;background:#808080"></div><div class="a" style="left:275px;top:329px;width:533px;height:1px;background:#808080"></div><div class="a" style="left:275px;top:347px;width:533px;height:1px;background:#808080"></div><div class="a" style="left:275px;top:365px;width:533px;height:1px;background:#808080"></div><div class="a" style="left:275px;top:383px;width:533px;height:1px;background:#808080"></div><div class="a" style="left:275px;top:401px;width:533px;height:1px;background:#808080"></div><div class="a" style="left:275px;top:419px;width:533px;height:1px;background:#808080"></div><div class="a" style="left:520px;top:293px;width:1px;height:144px;background:#707070"></div><div class="a" style="left:782px;top:293px;width:1px;height:144px;background:#707070"></div><div class="a" style="left:807px;top:293px;width:1px;height:144px;background:#707070"></div><div class="a" style="left:275px;top:437px;width:533px;height:1px;background:#808080"></div><svg class="a" style="left:302px;top:311px;" width="1" height="116" viewBox="0 0 1 116"><line x1="0.5" y1="0" x2="0.5" y2="116" stroke="#6a6a6a" stroke-dasharray="1 1"/></svg><svg class="a" style="left:321px;top:329px;" width="1" height="55" viewBox="0 0 1 55"><line x1="0.5" y1="0" x2="0.5" y2="55" stroke="#6a6a6a" stroke-dasharray="1 1"/></svg><svg class="a" style="left:279px;top:299px;" width="9" height="9" viewBox="0 0 9 9"><rect x="0.5" y="0.5" width="8" height="8" rx="1.5" fill="url(#eg)" stroke="#8d8d8d"/><path d="M2 4.5 H7" stroke="#2a4890" stroke-width="1.15"/></svg><svg class="a" style="left:288px;top:303px;" width="7" height="1" viewBox="0 0 7 1"><line x1="0" y1="0.5" x2="7" y2="0.5" stroke="#6a6a6a" stroke-dasharray="1 1"/></svg><svg class="a" style="left:296px;top:295px;" width="14" height="16" viewBox="0 0 14 16"><rect x="0.75" y="0.75" width="11" height="14.5" rx="1" fill="#fde58c" stroke="#eac444" stroke-width="1.5"/><rect x="10.5" y="9" width="2.5" height="6.25" rx="1" fill="#fde58c" stroke="#eac444" stroke-width="1"/></svg><div class="t" style="left:523px;top:296px;width:258px;overflow:hidden">Все</div><div class="a" style="left:789px;top:296px;width:13px;height:13px;border:1px solid #333;background:#fff"></div><svg class="a" style="left:298px;top:317px;" width="9" height="9" viewBox="0 0 9 9"><rect x="0.5" y="0.5" width="8" height="8" rx="1.5" fill="url(#eg)" stroke="#8d8d8d"/><path d="M2 4.5 H7" stroke="#2a4890" stroke-width="1.15"/></svg><svg class="a" style="left:307px;top:321px;" width="7" height="1" viewBox="0 0 7 1"><line x1="0" y1="0.5" x2="7" y2="0.5" stroke="#6a6a6a" stroke-dasharray="1 1"/></svg><svg class="a" style="left:315px;top:313px;" width="14" height="16" viewBox="0 0 14 16"><rect x="0.75" y="0.75" width="11" height="14.5" rx="1" fill="#fde58c" stroke="#eac444" stroke-width="1.5"/><rect x="10.5" y="9" width="2.5" height="6.25" rx="1" fill="#fde58c" stroke="#eac444" stroke-width="1"/></svg><div class="t" style="left:523px;top:314px;width:258px;overflow:hidden">LS Маркет</div><div class="a" style="left:789px;top:314px;width:13px;height:13px;border:1px solid #333;background:#fff"></div><svg class="a" style="left:317px;top:335px;" width="9" height="9" viewBox="0 0 9 9"><rect x="0.5" y="0.5" width="8" height="8" rx="1.5" fill="url(#eg)" stroke="#8d8d8d"/><path d="M2 4.5 H7" stroke="#2a4890" stroke-width="1.15"/><path d="M4.5 2 V7" stroke="#2a4890" stroke-width="1.15"/></svg><svg class="a" style="left:326px;top:339px;" width="7" height="1" viewBox="0 0 7 1"><line x1="0" y1="0.5" x2="7" y2="0.5" stroke="#6a6a6a" stroke-dasharray="1 1"/></svg><svg class="a" style="left:334px;top:331px;" width="14" height="16" viewBox="0 0 14 16"><rect x="0.75" y="0.75" width="11" height="14.5" rx="1" fill="#fde58c" stroke="#eac444" stroke-width="1.5"/><rect x="10.5" y="9" width="2.5" height="6.25" rx="1" fill="#fde58c" stroke="#eac444" stroke-width="1"/></svg><div class="t" style="left:523px;top:332px;width:258px;overflow:hidden">LS Маркет Бейз</div><div class="a" style="left:783px;top:330px;width:24px;height:17px;background:#000"></div><div class="a" style="left:789px;top:332px;width:13px;height:13px;border:1px solid #333;background:#fff"></div><svg class="a" style="left:789px;top:332px;" width="13" height="13" viewBox="0 0 13 13"><path d="M2.5 6.5 L5.3 9.3 L10.5 3.8" fill="none" stroke="#333" stroke-width="1.2"/></svg><svg class="a" style="left:317px;top:353px;" width="9" height="9" viewBox="0 0 9 9"><rect x="0.5" y="0.5" width="8" height="8" rx="1.5" fill="url(#eg)" stroke="#8d8d8d"/><path d="M2 4.5 H7" stroke="#2a4890" stroke-width="1.15"/><path d="M4.5 2 V7" stroke="#2a4890" stroke-width="1.15"/></svg><svg class="a" style="left:326px;top:357px;" width="7" height="1" viewBox="0 0 7 1"><line x1="0" y1="0.5" x2="7" y2="0.5" stroke="#6a6a6a" stroke-dasharray="1 1"/></svg><svg class="a" style="left:334px;top:349px;" width="14" height="16" viewBox="0 0 14 16"><rect x="0.75" y="0.75" width="11" height="14.5" rx="1" fill="#fde58c" stroke="#eac444" stroke-width="1.5"/><rect x="10.5" y="9" width="2.5" height="6.25" rx="1" fill="#fde58c" stroke="#eac444" stroke-width="1"/></svg><div class="t" style="left:523px;top:350px;width:258px;overflow:hidden">LS Маркет Лайт</div><div class="a" style="left:789px;top:350px;width:13px;height:13px;border:1px solid #333;background:#fff"></div><svg class="a" style="left:317px;top:371px;" width="9" height="9" viewBox="0 0 9 9"><rect x="0.5" y="0.5" width="8" height="8" rx="1.5" fill="url(#eg)" stroke="#8d8d8d"/><path d="M2 4.5 H7" stroke="#2a4890" stroke-width="1.15"/><path d="M4.5 2 V7" stroke="#2a4890" stroke-width="1.15"/></svg><svg class="a" style="left:326px;top:375px;" width="7" height="1" viewBox="0 0 7 1"><line x1="0" y1="0.5" x2="7" y2="0.5" stroke="#6a6a6a" stroke-dasharray="1 1"/></svg><svg class="a" style="left:334px;top:367px;" width="14" height="16" viewBox="0 0 14 16"><rect x="0.75" y="0.75" width="11" height="14.5" rx="1" fill="#fde58c" stroke="#eac444" stroke-width="1.5"/><rect x="10.5" y="9" width="2.5" height="6.25" rx="1" fill="#fde58c" stroke="#eac444" stroke-width="1"/></svg><div class="t" style="left:523px;top:368px;width:258px;overflow:hidden">LS Маркет Макси</div><div class="a" style="left:789px;top:368px;width:13px;height:13px;border:1px solid #333;background:#fff"></div><svg class="a" style="left:317px;top:389px;" width="9" height="9" viewBox="0 0 9 9"><rect x="0.5" y="0.5" width="8" height="8" rx="1.5" fill="url(#eg)" stroke="#8d8d8d"/><path d="M2 4.5 H7" stroke="#2a4890" stroke-width="1.15"/><path d="M4.5 2 V7" stroke="#2a4890" stroke-width="1.15"/></svg><svg class="a" style="left:326px;top:393px;" width="7" height="1" viewBox="0 0 7 1"><line x1="0" y1="0.5" x2="7" y2="0.5" stroke="#6a6a6a" stroke-dasharray="1 1"/></svg><svg class="a" style="left:334px;top:385px;" width="14" height="16" viewBox="0 0 14 16"><rect x="0.75" y="0.75" width="11" height="14.5" rx="1" fill="#fde58c" stroke="#eac444" stroke-width="1.5"/><rect x="10.5" y="9" width="2.5" height="6.25" rx="1" fill="#fde58c" stroke="#eac444" stroke-width="1"/></svg><div class="t" style="left:523px;top:386px;width:258px;overflow:hidden">LS Маркет Эконом</div><div class="a" style="left:789px;top:386px;width:13px;height:13px;border:1px solid #333;background:#fff"></div><svg class="a" style="left:303px;top:411px;" width="10" height="1" viewBox="0 0 10 1"><line x1="0" y1="0.5" x2="10" y2="0.5" stroke="#6a6a6a" stroke-dasharray="1 1"/></svg><svg class="a" style="left:315px;top:406px;" width="10" height="10" viewBox="0 0 10 10"><circle cx="5" cy="5" r="4.3" fill="#555"/></svg><div class="t" style="left:523px;top:404px;width:258px;overflow:hidden">Склады контрагентов</div><div class="a" style="left:789px;top:404px;width:13px;height:13px;border:1px solid #333;background:#fff"></div><svg class="a" style="left:298px;top:425px;" width="9" height="9" viewBox="0 0 9 9"><rect x="0.5" y="0.5" width="8" height="8" rx="1.5" fill="url(#eg)" stroke="#8d8d8d"/><path d="M2 4.5 H7" stroke="#2a4890" stroke-width="1.15"/><path d="M4.5 2 V7" stroke="#2a4890" stroke-width="1.15"/></svg><svg class="a" style="left:307px;top:429px;" width="7" height="1" viewBox="0 0 7 1"><line x1="0" y1="0.5" x2="7" y2="0.5" stroke="#6a6a6a" stroke-dasharray="1 1"/></svg><svg class="a" style="left:315px;top:421px;" width="14" height="16" viewBox="0 0 14 16"><rect x="0.75" y="0.75" width="11" height="14.5" rx="1" fill="#fde58c" stroke="#eac444" stroke-width="1.5"/><rect x="10.5" y="9" width="2.5" height="6.25" rx="1" fill="#fde58c" stroke="#eac444" stroke-width="1"/></svg><div class="t" style="left:523px;top:422px;width:258px;overflow:hidden">Собственные склады</div><div class="a" style="left:789px;top:422px;width:13px;height:13px;border:1px solid #333;background:#fff"></div></div><div class="a" style="left:808px;top:260px;width:1px;height:283px;background:#f0f0f0"></div><div class="a" style="left:819px;top:259px;width:536px;height:285px;background:#fff;border:1px solid #828790"></div><div class="a" style="left:0;top:0;width:1365px;height:632px;clip-path:inset(260px 11px 89px 820px)"><div class="a" style="left:990px;top:260px;width:1px;height:33px;background:#e5e5e5"></div><div class="a" style="left:1033px;top:260px;width:1px;height:33px;background:#e5e5e5"></div><div class="a" style="left:1309px;top:260px;width:1px;height:33px;background:#e5e5e5"></div><div class="a" style="left:1334px;top:260px;width:1px;height:33px;background:#e5e5e5"></div><div class="a" style="left:820px;top:293px;width:534px;height:1px;background:#ececec"></div><div class="t" style="left:819px;top:266px;width:171px;text-align:center;font-size:10px">Дерево</div><svg class="a" style="left:997px;top:266px;" width="12" height="12" viewBox="0 0 12 12"><circle cx="6" cy="6" r="5" fill="#fff" stroke="#3db4ea" stroke-width="1.3"/><path d="M3.6 7.2 L6 4.8 L8.4 7.2" fill="none" stroke="#444" stroke-width="1.4"/></svg><div class="t" style="left:1013px;top:266px;width:20px;overflow:hidden;font-size:10px">Порядок</div><svg class="a" style="left:1131px;top:266px;" width="12" height="12" viewBox="0 0 12 12"><circle cx="6" cy="6" r="5" fill="#fff" stroke="#3db4ea" stroke-width="1.3"/><path d="M3.6 7.2 L6 4.8 L8.4 7.2" fill="none" stroke="#444" stroke-width="1.4"/></svg><div class="t" style="left:1147px;top:266px;font-size:10px">Наименование</div><div class="t" style="left:1316px;top:266px;width:18px;overflow:hidden;font-size:10px">Вкл</div><div class="a" style="left:820px;top:492px;width:515px;height:17px;background:#f7f7fe"></div><div class="a" style="left:992px;top:492px;width:318px;height:1px;background:#a6a6f2"></div><div class="a" style="left:992px;top:508px;width:318px;height:1px;background:#a6a6f2"></div><div class="a" style="left:820px;top:311px;width:516px;height:1px;background:#808080"></div><div class="a" style="left:820px;top:329px;width:516px;height:1px;background:#808080"></div><div class="a" style="left:820px;top:347px;width:516px;height:1px;background:#808080"></div><div class="a" style="left:820px;top:365px;width:516px;height:1px;background:#808080"></div><div class="a" style="left:820px;top:383px;width:516px;height:1px;background:#808080"></div><div class="a" style="left:820px;top:401px;width:516px;height:1px;background:#808080"></div><div class="a" style="left:820px;top:419px;width:516px;height:1px;background:#808080"></div><div class="a" style="left:820px;top:437px;width:516px;height:1px;background:#808080"></div><div class="a" style="left:820px;top:455px;width:516px;height:1px;background:#808080"></div><div class="a" style="left:820px;top:473px;width:516px;height:1px;background:#808080"></div><div class="a" style="left:820px;top:491px;width:516px;height:1px;background:#808080"></div><div class="a" style="left:820px;top:509px;width:516px;height:1px;background:#808080"></div><div class="a" style="left:820px;top:527px;width:516px;height:1px;background:#808080"></div><div class="a" style="left:991px;top:293px;width:1px;height:250px;background:#707070"></div><div class="a" style="left:1034px;top:293px;width:1px;height:250px;background:#707070"></div><div class="a" style="left:1310px;top:293px;width:1px;height:250px;background:#707070"></div><div class="a" style="left:1335px;top:293px;width:1px;height:250px;background:#707070"></div><svg class="a" style="left:847px;top:311px;" width="1" height="232" viewBox="0 0 1 232"><line x1="0.5" y1="0" x2="0.5" y2="232" stroke="#6a6a6a" stroke-dasharray="1 1"/></svg><svg class="a" style="left:866px;top:329px;" width="1" height="214" viewBox="0 0 1 214"><line x1="0.5" y1="0" x2="0.5" y2="214" stroke="#6a6a6a" stroke-dasharray="1 1"/></svg><svg class="a" style="left:885px;top:347px;" width="1" height="196" viewBox="0 0 1 196"><line x1="0.5" y1="0" x2="0.5" y2="196" stroke="#6a6a6a" stroke-dasharray="1 1"/></svg><svg class="a" style="left:824px;top:299px;" width="9" height="9" viewBox="0 0 9 9"><rect x="0.5" y="0.5" width="8" height="8" rx="1.5" fill="url(#eg)" stroke="#8d8d8d"/><path d="M2 4.5 H7" stroke="#2a4890" stroke-width="1.15"/></svg><svg class="a" style="left:833px;top:303px;" width="7" height="1" viewBox="0 0 7 1"><line x1="0" y1="0.5" x2="7" y2="0.5" stroke="#6a6a6a" stroke-dasharray="1 1"/></svg><svg class="a" style="left:841px;top:295px;" width="14" height="16" viewBox="0 0 14 16"><rect x="0.75" y="0.75" width="11" height="14.5" rx="1" fill="#fde58c" stroke="#eac444" stroke-width="1.5"/><rect x="10.5" y="9" width="2.5" height="6.25" rx="1" fill="#fde58c" stroke="#eac444" stroke-width="1"/></svg><div class="t" style="left:1036px;top:296px;width:273px;overflow:hidden">Все</div><div class="a" style="left:1317px;top:296px;width:13px;height:13px;border:1px solid #333;background:#fff"></div><svg class="a" style="left:843px;top:317px;" width="9" height="9" viewBox="0 0 9 9"><rect x="0.5" y="0.5" width="8" height="8" rx="1.5" fill="url(#eg)" stroke="#8d8d8d"/><path d="M2 4.5 H7" stroke="#2a4890" stroke-width="1.15"/></svg><svg class="a" style="left:852px;top:321px;" width="7" height="1" viewBox="0 0 7 1"><line x1="0" y1="0.5" x2="7" y2="0.5" stroke="#6a6a6a" stroke-dasharray="1 1"/></svg><svg class="a" style="left:860px;top:313px;" width="14" height="16" viewBox="0 0 14 16"><rect x="0.75" y="0.75" width="11" height="14.5" rx="1" fill="#fde58c" stroke="#eac444" stroke-width="1.5"/><rect x="10.5" y="9" width="2.5" height="6.25" rx="1" fill="#fde58c" stroke="#eac444" stroke-width="1"/></svg><div class="t" style="left:1036px;top:314px;width:273px;overflow:hidden">Продовольственные товары</div><div class="t" style="left:1000px;top:314px;width:30px;text-align:right">1</div><div class="a" style="left:1317px;top:314px;width:13px;height:13px;border:1px solid #333;background:#fff"></div><svg class="a" style="left:862px;top:335px;" width="9" height="9" viewBox="0 0 9 9"><rect x="0.5" y="0.5" width="8" height="8" rx="1.5" fill="url(#eg)" stroke="#8d8d8d"/><path d="M2 4.5 H7" stroke="#2a4890" stroke-width="1.15"/></svg><svg class="a" style="left:871px;top:339px;" width="7" height="1" viewBox="0 0 7 1"><line x1="0" y1="0.5" x2="7" y2="0.5" stroke="#6a6a6a" stroke-dasharray="1 1"/></svg><svg class="a" style="left:879px;top:331px;" width="14" height="16" viewBox="0 0 14 16"><rect x="0.75" y="0.75" width="11" height="14.5" rx="1" fill="#fde58c" stroke="#eac444" stroke-width="1.5"/><rect x="10.5" y="9" width="2.5" height="6.25" rx="1" fill="#fde58c" stroke="#eac444" stroke-width="1"/></svg><div class="t" style="left:1036px;top:332px;width:273px;overflow:hidden">Скоропортящие товары</div><div class="t" style="left:1000px;top:332px;width:30px;text-align:right">1</div><div class="a" style="left:1317px;top:332px;width:13px;height:13px;border:1px solid #333;background:#fff"></div><svg class="a" style="left:881px;top:353px;" width="9" height="9" viewBox="0 0 9 9"><rect x="0.5" y="0.5" width="8" height="8" rx="1.5" fill="url(#eg)" stroke="#8d8d8d"/><path d="M2 4.5 H7" stroke="#2a4890" stroke-width="1.15"/><path d="M4.5 2 V7" stroke="#2a4890" stroke-width="1.15"/></svg><svg class="a" style="left:890px;top:357px;" width="7" height="1" viewBox="0 0 7 1"><line x1="0" y1="0.5" x2="7" y2="0.5" stroke="#6a6a6a" stroke-dasharray="1 1"/></svg><svg class="a" style="left:898px;top:349px;" width="14" height="16" viewBox="0 0 14 16"><rect x="0.75" y="0.75" width="11" height="14.5" rx="1" fill="#fde58c" stroke="#eac444" stroke-width="1.5"/><rect x="10.5" y="9" width="2.5" height="6.25" rx="1" fill="#fde58c" stroke="#eac444" stroke-width="1"/></svg><div class="t" style="left:1036px;top:350px;width:273px;overflow:hidden">Булочные изделия</div><div class="a" style="left:1317px;top:350px;width:13px;height:13px;border:1px solid #333;background:#fff"></div><svg class="a" style="left:881px;top:371px;" width="9" height="9" viewBox="0 0 9 9"><rect x="0.5" y="0.5" width="8" height="8" rx="1.5" fill="url(#eg)" stroke="#8d8d8d"/><path d="M2 4.5 H7" stroke="#2a4890" stroke-width="1.15"/><path d="M4.5 2 V7" stroke="#2a4890" stroke-width="1.15"/></svg><svg class="a" style="left:890px;top:375px;" width="7" height="1" viewBox="0 0 7 1"><line x1="0" y1="0.5" x2="7" y2="0.5" stroke="#6a6a6a" stroke-dasharray="1 1"/></svg><svg class="a" style="left:898px;top:367px;" width="14" height="16" viewBox="0 0 14 16"><rect x="0.75" y="0.75" width="11" height="14.5" rx="1" fill="#fde58c" stroke="#eac444" stroke-width="1.5"/><rect x="10.5" y="9" width="2.5" height="6.25" rx="1" fill="#fde58c" stroke="#eac444" stroke-width="1"/></svg><div class="t" style="left:1036px;top:368px;width:273px;overflow:hidden">Говядина зам.</div><div class="a" style="left:1317px;top:368px;width:13px;height:13px;border:1px solid #333;background:#fff"></div><svg class="a" style="left:881px;top:389px;" width="9" height="9" viewBox="0 0 9 9"><rect x="0.5" y="0.5" width="8" height="8" rx="1.5" fill="url(#eg)" stroke="#8d8d8d"/><path d="M2 4.5 H7" stroke="#2a4890" stroke-width="1.15"/><path d="M4.5 2 V7" stroke="#2a4890" stroke-width="1.15"/></svg><svg class="a" style="left:890px;top:393px;" width="7" height="1" viewBox="0 0 7 1"><line x1="0" y1="0.5" x2="7" y2="0.5" stroke="#6a6a6a" stroke-dasharray="1 1"/></svg><svg class="a" style="left:898px;top:385px;" width="14" height="16" viewBox="0 0 14 16"><rect x="0.75" y="0.75" width="11" height="14.5" rx="1" fill="#fde58c" stroke="#eac444" stroke-width="1.5"/><rect x="10.5" y="9" width="2.5" height="6.25" rx="1" fill="#fde58c" stroke="#eac444" stroke-width="1"/></svg><div class="t" style="left:1036px;top:386px;width:273px;overflow:hidden">Говядина охл.</div><div class="a" style="left:1317px;top:386px;width:13px;height:13px;border:1px solid #333;background:#fff"></div><svg class="a" style="left:881px;top:407px;" width="9" height="9" viewBox="0 0 9 9"><rect x="0.5" y="0.5" width="8" height="8" rx="1.5" fill="url(#eg)" stroke="#8d8d8d"/><path d="M2 4.5 H7" stroke="#2a4890" stroke-width="1.15"/><path d="M4.5 2 V7" stroke="#2a4890" stroke-width="1.15"/></svg><svg class="a" style="left:890px;top:411px;" width="7" height="1" viewBox="0 0 7 1"><line x1="0" y1="0.5" x2="7" y2="0.5" stroke="#6a6a6a" stroke-dasharray="1 1"/></svg><svg class="a" style="left:898px;top:403px;" width="14" height="16" viewBox="0 0 14 16"><rect x="0.75" y="0.75" width="11" height="14.5" rx="1" fill="#fde58c" stroke="#eac444" stroke-width="1.5"/><rect x="10.5" y="9" width="2.5" height="6.25" rx="1" fill="#fde58c" stroke="#eac444" stroke-width="1"/></svg><div class="t" style="left:1036px;top:404px;width:273px;overflow:hidden">Готовая продукция</div><div class="a" style="left:1317px;top:404px;width:13px;height:13px;border:1px solid #333;background:#fff"></div><svg class="a" style="left:881px;top:425px;" width="9" height="9" viewBox="0 0 9 9"><rect x="0.5" y="0.5" width="8" height="8" rx="1.5" fill="url(#eg)" stroke="#8d8d8d"/><path d="M2 4.5 H7" stroke="#2a4890" stroke-width="1.15"/><path d="M4.5 2 V7" stroke="#2a4890" stroke-width="1.15"/></svg><svg class="a" style="left:890px;top:429px;" width="7" height="1" viewBox="0 0 7 1"><line x1="0" y1="0.5" x2="7" y2="0.5" stroke="#6a6a6a" stroke-dasharray="1 1"/></svg><svg class="a" style="left:898px;top:421px;" width="14" height="16" viewBox="0 0 14 16"><rect x="0.75" y="0.75" width="11" height="14.5" rx="1" fill="#fde58c" stroke="#eac444" stroke-width="1.5"/><rect x="10.5" y="9" width="2.5" height="6.25" rx="1" fill="#fde58c" stroke="#eac444" stroke-width="1"/></svg><div class="t" style="left:1036px;top:422px;width:273px;overflow:hidden">Другие виды мяса зам.</div><div class="a" style="left:1317px;top:422px;width:13px;height:13px;border:1px solid #333;background:#fff"></div><svg class="a" style="left:881px;top:443px;" width="9" height="9" viewBox="0 0 9 9"><rect x="0.5" y="0.5" width="8" height="8" rx="1.5" fill="url(#eg)" stroke="#8d8d8d"/><path d="M2 4.5 H7" stroke="#2a4890" stroke-width="1.15"/><path d="M4.5 2 V7" stroke="#2a4890" stroke-width="1.15"/></svg><svg class="a" style="left:890px;top:447px;" width="7" height="1" viewBox="0 0 7 1"><line x1="0" y1="0.5" x2="7" y2="0.5" stroke="#6a6a6a" stroke-dasharray="1 1"/></svg><svg class="a" style="left:898px;top:439px;" width="14" height="16" viewBox="0 0 14 16"><rect x="0.75" y="0.75" width="11" height="14.5" rx="1" fill="#fde58c" stroke="#eac444" stroke-width="1.5"/><rect x="10.5" y="9" width="2.5" height="6.25" rx="1" fill="#fde58c" stroke="#eac444" stroke-width="1"/></svg><div class="t" style="left:1036px;top:440px;width:273px;overflow:hidden">Другие виды мяса охл.</div><div class="a" style="left:1317px;top:440px;width:13px;height:13px;border:1px solid #333;background:#fff"></div><svg class="a" style="left:881px;top:461px;" width="9" height="9" viewBox="0 0 9 9"><rect x="0.5" y="0.5" width="8" height="8" rx="1.5" fill="url(#eg)" stroke="#8d8d8d"/><path d="M2 4.5 H7" stroke="#2a4890" stroke-width="1.15"/><path d="M4.5 2 V7" stroke="#2a4890" stroke-width="1.15"/></svg><svg class="a" style="left:890px;top:465px;" width="7" height="1" viewBox="0 0 7 1"><line x1="0" y1="0.5" x2="7" y2="0.5" stroke="#6a6a6a" stroke-dasharray="1 1"/></svg><svg class="a" style="left:898px;top:457px;" width="14" height="16" viewBox="0 0 14 16"><rect x="0.75" y="0.75" width="11" height="14.5" rx="1" fill="#fde58c" stroke="#eac444" stroke-width="1.5"/><rect x="10.5" y="9" width="2.5" height="6.25" rx="1" fill="#fde58c" stroke="#eac444" stroke-width="1"/></svg><div class="t" style="left:1036px;top:458px;width:273px;overflow:hidden">Замороженные продукты</div><div class="a" style="left:1317px;top:458px;width:13px;height:13px;border:1px solid #333;background:#fff"></div><svg class="a" style="left:881px;top:479px;" width="9" height="9" viewBox="0 0 9 9"><rect x="0.5" y="0.5" width="8" height="8" rx="1.5" fill="url(#eg)" stroke="#8d8d8d"/><path d="M2 4.5 H7" stroke="#2a4890" stroke-width="1.15"/><path d="M4.5 2 V7" stroke="#2a4890" stroke-width="1.15"/></svg><svg class="a" style="left:890px;top:483px;" width="7" height="1" viewBox="0 0 7 1"><line x1="0" y1="0.5" x2="7" y2="0.5" stroke="#6a6a6a" stroke-dasharray="1 1"/></svg><svg class="a" style="left:898px;top:475px;" width="14" height="16" viewBox="0 0 14 16"><rect x="0.75" y="0.75" width="11" height="14.5" rx="1" fill="#fde58c" stroke="#eac444" stroke-width="1.5"/><rect x="10.5" y="9" width="2.5" height="6.25" rx="1" fill="#fde58c" stroke="#eac444" stroke-width="1"/></svg><div class="t" style="left:1036px;top:476px;width:273px;overflow:hidden">Колбасные изделия, мясокопчености</div><div class="a" style="left:1317px;top:476px;width:13px;height:13px;border:1px solid #333;background:#fff"></div><svg class="a" style="left:881px;top:497px;" width="9" height="9" viewBox="0 0 9 9"><rect x="0.5" y="0.5" width="8" height="8" rx="1.5" fill="url(#eg)" stroke="#8d8d8d"/><path d="M2 4.5 H7" stroke="#2a4890" stroke-width="1.15"/><path d="M4.5 2 V7" stroke="#2a4890" stroke-width="1.15"/></svg><svg class="a" style="left:890px;top:501px;" width="7" height="1" viewBox="0 0 7 1"><line x1="0" y1="0.5" x2="7" y2="0.5" stroke="#6a6a6a" stroke-dasharray="1 1"/></svg><svg class="a" style="left:898px;top:493px;" width="14" height="16" viewBox="0 0 14 16"><rect x="0.75" y="0.75" width="11" height="14.5" rx="1" fill="#fde58c" stroke="#eac444" stroke-width="1.5"/><rect x="10.5" y="9" width="2.5" height="6.25" rx="1" fill="#fde58c" stroke="#eac444" stroke-width="1"/></svg><div class="t" style="left:1036px;top:494px;width:273px;overflow:hidden">Молочная продукция</div><div class="a" style="left:1317px;top:494px;width:13px;height:13px;border:1px solid #333;background:#fff"></div><svg class="a" style="left:1317px;top:494px;" width="13" height="13" viewBox="0 0 13 13"><path d="M2.5 6.5 L5.3 9.3 L10.5 3.8" fill="none" stroke="#333" stroke-width="1.2"/></svg><svg class="a" style="left:881px;top:515px;" width="9" height="9" viewBox="0 0 9 9"><rect x="0.5" y="0.5" width="8" height="8" rx="1.5" fill="url(#eg)" stroke="#8d8d8d"/><path d="M2 4.5 H7" stroke="#2a4890" stroke-width="1.15"/><path d="M4.5 2 V7" stroke="#2a4890" stroke-width="1.15"/></svg><svg class="a" style="left:890px;top:519px;" width="7" height="1" viewBox="0 0 7 1"><line x1="0" y1="0.5" x2="7" y2="0.5" stroke="#6a6a6a" stroke-dasharray="1 1"/></svg><svg class="a" style="left:898px;top:511px;" width="14" height="16" viewBox="0 0 14 16"><rect x="0.75" y="0.75" width="11" height="14.5" rx="1" fill="#fde58c" stroke="#eac444" stroke-width="1.5"/><rect x="10.5" y="9" width="2.5" height="6.25" rx="1" fill="#fde58c" stroke="#eac444" stroke-width="1"/></svg><div class="t" style="left:1036px;top:512px;width:273px;overflow:hidden">Мучнистые кондитерские изделия поставщиков</div><div class="a" style="left:1317px;top:512px;width:13px;height:13px;border:1px solid #333;background:#fff"></div><svg class="a" style="left:881px;top:533px;" width="9" height="9" viewBox="0 0 9 9"><rect x="0.5" y="0.5" width="8" height="8" rx="1.5" fill="url(#eg)" stroke="#8d8d8d"/><path d="M2 4.5 H7" stroke="#2a4890" stroke-width="1.15"/><path d="M4.5 2 V7" stroke="#2a4890" stroke-width="1.15"/></svg><svg class="a" style="left:890px;top:537px;" width="7" height="1" viewBox="0 0 7 1"><line x1="0" y1="0.5" x2="7" y2="0.5" stroke="#6a6a6a" stroke-dasharray="1 1"/></svg><svg class="a" style="left:898px;top:529px;" width="14" height="16" viewBox="0 0 14 16"><rect x="0.75" y="0.75" width="11" height="14.5" rx="1" fill="#fde58c" stroke="#eac444" stroke-width="1.5"/><rect x="10.5" y="9" width="2.5" height="6.25" rx="1" fill="#fde58c" stroke="#eac444" stroke-width="1"/></svg><div class="t" style="left:1036px;top:530px;width:273px;overflow:hidden">Овощи, фрукты, грибы</div><div class="a" style="left:1317px;top:530px;width:13px;height:13px;border:1px solid #333;background:#fff"></div></div><div class="a" style="left:1336px;top:260px;width:18px;height:283px;background:#f0f0f0"></div><div class="a" style="left:1335px;top:260px;width:1px;height:33px;background:#e5e5e5"></div><div class="a" style="left:1339px;top:311px;width:14px;height:67px;background:#cdcdcd"></div><svg class="a" style="left:1341px;top:300px;" width="9" height="7" viewBox="0 0 9 7"><path d="M1 6 L4.5 2.5 L8 6" fill="none" stroke="#505050" stroke-width="2"/></svg><svg class="a" style="left:1341px;top:532px;" width="9" height="7" viewBox="0 0 9 7"><path d="M1 1 L4.5 4.5 L8 1" fill="none" stroke="#505050" stroke-width="2"/></svg>
<svg class="a" style="left:278px;top:550px;" width="17" height="15" viewBox="0 0 17 15"><path d="M0.5 1.5 H16" stroke="#222" stroke-width="1.3"/><path d="M2.5 5.5 H14" stroke="#3db4ea" stroke-width="1.3"/><path d="M4.5 9.5 H12" stroke="#222" stroke-width="1.3"/><path d="M6.5 13.5 H10" stroke="#3db4ea" stroke-width="1.3"/></svg><div class="a" style="left:298px;top:547px;width:1px;height:20px;background:#777"></div><svg class="a" style="left:305px;top:549px;" width="15" height="17" viewBox="0 0 15 17"><rect x="3" y="0.5" width="8" height="2" fill="#7fd0f2"/><rect x="1" y="3" width="12" height="12.5" rx="2" fill="#fff" stroke="#555" stroke-width="1.6"/><path d="M7 6 V12 M4 9 H10" stroke="#3db4ea" stroke-width="1.5"/></svg><svg class="a" style="left:324px;top:549px;" width="18" height="17" viewBox="0 0 18 17"><path d="M5.3 0.75 H16 V10.6" fill="none" stroke="#3db4ea" stroke-width="1.4"/><path d="M2.4 2.75 H13.5 V12.5" fill="none" stroke="#3db4ea" stroke-width="1.4"/><rect x="1" y="4.8" width="10.6" height="10.6" rx="1" fill="#fff" stroke="#444" stroke-width="1.7"/><path d="M6.3 7.5 V13 M3.6 10.2 H9" stroke="#3db4ea" stroke-width="1.3"/></svg><svg class="a" style="left:823px;top:550px;" width="17" height="15" viewBox="0 0 17 15"><path d="M0.5 1.5 H16" stroke="#222" stroke-width="1.3"/><path d="M2.5 5.5 H14" stroke="#3db4ea" stroke-width="1.3"/><path d="M4.5 9.5 H12" stroke="#222" stroke-width="1.3"/><path d="M6.5 13.5 H10" stroke="#3db4ea" stroke-width="1.3"/></svg><div class="a" style="left:843px;top:547px;width:1px;height:20px;background:#777"></div><svg class="a" style="left:850px;top:549px;" width="15" height="17" viewBox="0 0 15 17"><rect x="3" y="0.5" width="8" height="2" fill="#7fd0f2"/><rect x="1" y="3" width="12" height="12.5" rx="2" fill="#fff" stroke="#555" stroke-width="1.6"/><path d="M7 6 V12 M4 9 H10" stroke="#3db4ea" stroke-width="1.5"/></svg><svg class="a" style="left:869px;top:549px;" width="18" height="17" viewBox="0 0 18 17"><path d="M5.3 0.75 H16 V10.6" fill="none" stroke="#3db4ea" stroke-width="1.4"/><path d="M2.4 2.75 H13.5 V12.5" fill="none" stroke="#3db4ea" stroke-width="1.4"/><rect x="1" y="4.8" width="10.6" height="10.6" rx="1" fill="#fff" stroke="#444" stroke-width="1.7"/><path d="M6.3 7.5 V13 M3.6 10.2 H9" stroke="#3db4ea" stroke-width="1.3"/></svg><div class="a" style="left:691px;top:550px;width:13px;height:13px;border:1px solid #333;background:#fbfbfb"></div><svg class="a" style="left:691px;top:550px;" width="13" height="13" viewBox="0 0 13 13"><path d="M2.5 6.5 L5.3 9.3 L10.5 3.8" fill="none" stroke="#333" stroke-width="1.2"/></svg><div class="t" style="left:708px;top:550px">Активный (ctrl F10)</div><div class="a" style="left:1260px;top:550px;width:13px;height:13px;border:1px solid #333;background:#fbfbfb"></div><svg class="a" style="left:1260px;top:550px;" width="13" height="13" viewBox="0 0 13 13"><path d="M2.5 6.5 L5.3 9.3 L10.5 3.8" fill="none" stroke="#333" stroke-width="1.2"/></svg><div class="t" style="left:1277px;top:550px">Активные (F5)</div><div class="a" style="left:271px;top:574px;width:1087px;height:1px;background:#fff"></div><div class="a" style="left:1067px;top:581px;width:19px;height:21px;background:#e1e1e1;border:1px solid #adadad"></div><svg class="a" style="left:1069px;top:583px;" width="15" height="17" viewBox="0 0 15 17"><path d="M2.5 8 A5.5 5.5 0 0 1 12 4.5" fill="none" stroke="#333" stroke-width="1.5"/><polygon points="13.5,2 13.5,8 8.5,7" fill="#222"/><path d="M12.5 9.5 A5.5 5.5 0 0 1 3 13" fill="none" stroke="#3db4ea" stroke-width="1.5"/><polygon points="1.5,15.5 1.5,9.5 6.5,10.5" fill="#3db4ea"/></svg><div class="a" style="left:1091px;top:580px;width:103px;height:24px;border:1px solid #19d219"></div><div class="a" style="left:1092px;top:581px;width:101px;height:22px;background:#e1e1e1;border:1px solid #b5b0c8"></div><svg class="a" style="left:1107px;top:585px;" width="13" height="12" viewBox="0 0 13 12"><path d="M1.5 3 Q1.5 1 3.5 1 H8.5 L11.5 4 V9.5 Q11.5 11 10 11 H3 Q1.5 11 1.5 9.5 Z" fill="#fff" stroke="#555" stroke-width="1.3"/><path d="M3.5 11 V7.5 H9.5 V11" fill="none" stroke="#3db4ea" stroke-width="1.5"/></svg><div class="t" style="left:1123px;top:585px">Сохранить</div><div class="a" style="left:1088px;top:575px;width:109px;height:33px;border:3px solid #ff0000;border-radius:2px"></div><div class="a" style="left:1199px;top:581px;width:61px;height:21px;background:#e1e1e1;border:1px solid #adadad"></div><svg class="a" style="left:1213px;top:586px;" width="13" height="11" viewBox="0 0 13 11"><path d="M1 5.5 L4.5 9.5 L12 1" fill="none" stroke="#222" stroke-width="1.3"/></svg><div class="t" style="left:1230px;top:585px">OK</div><div class="a" style="left:1266px;top:581px;width:91px;height:21px;background:#e1e1e1;border:1px solid #adadad"></div><svg class="a" style="left:1282px;top:586px;" width="11" height="11" viewBox="0 0 11 11"><path d="M1 1 L10 10 M10 1 L1 10" stroke="#222" stroke-width="1.3"/></svg><div class="t" style="left:1296px;top:585px">Закрыть</div><svg class="a" style="left:277px;top:611px;" width="11" height="14" viewBox="0 0 11 14"><path d="M3 0.5 H9.5 V12.5 H0.5 V3 Z" fill="#fff" stroke="#333" stroke-width="1"/><path d="M0.5 3 L3 0.5 V3 Z" fill="#999"/></svg><div class="t" style="left:296px;top:611px">Типы аналитических отчетов</div><div class="a" style="left:455px;top:605px;width:1px;height:23px;background:#fafafa"></div><div class="a" style="left:456px;top:605px;width:174px;height:24px;background:#c9c9c9"></div><svg class="a" style="left:462px;top:611px;" width="11" height="14" viewBox="0 0 11 14"><path d="M3 0.5 H9.5 V12.5 H0.5 V3 Z" fill="#fff" stroke="#333" stroke-width="1"/><path d="M0.5 3 L3 0.5 V3 Z" fill="#999"/></svg><div class="t" style="left:481px;top:611px">Тип аналитического отчета</div><div class="a" style="left:780px;top:328px;width:28px;height:20px;border:3px solid #ff0000;border-radius:1px"></div><div class="a" style="left:1310px;top:490px;width:25px;height:21px;border:3px solid #ff0000;border-radius:1px"></div><svg class="a" style="left:736px;top:265px;" width="59" height="72" viewBox="0 0 59 72"><line x1="10.00" y1="10.00" x2="42.40" y2="53.20" stroke="#ff0000" stroke-width="3.2" stroke-linecap="round"/><polygon points="49.00,62.00 36.00,55.50 46.40,47.70" fill="#ff0000"/></svg><svg class="a" style="left:1248px;top:431px;" width="74" height="65" viewBox="0 0 74 65"><line x1="10.00" y1="10.00" x2="55.55" y2="47.96" stroke="#ff0000" stroke-width="3.2" stroke-linecap="round"/><polygon points="64.00,55.00 49.85,51.67 58.17,41.68" fill="#ff0000"/></svg><svg class="a" style="left:1031px;top:539.5px;" width="93.5" height="45.0" viewBox="0 0 93.5 45.0"><line x1="10.00" y1="10.00" x2="73.09" y2="31.46" stroke="#ff0000" stroke-width="3.2" stroke-linecap="round"/><polygon points="83.50,35.00 69.10,36.97 73.29,24.66" fill="#ff0000"/></svg>
</body></html>
